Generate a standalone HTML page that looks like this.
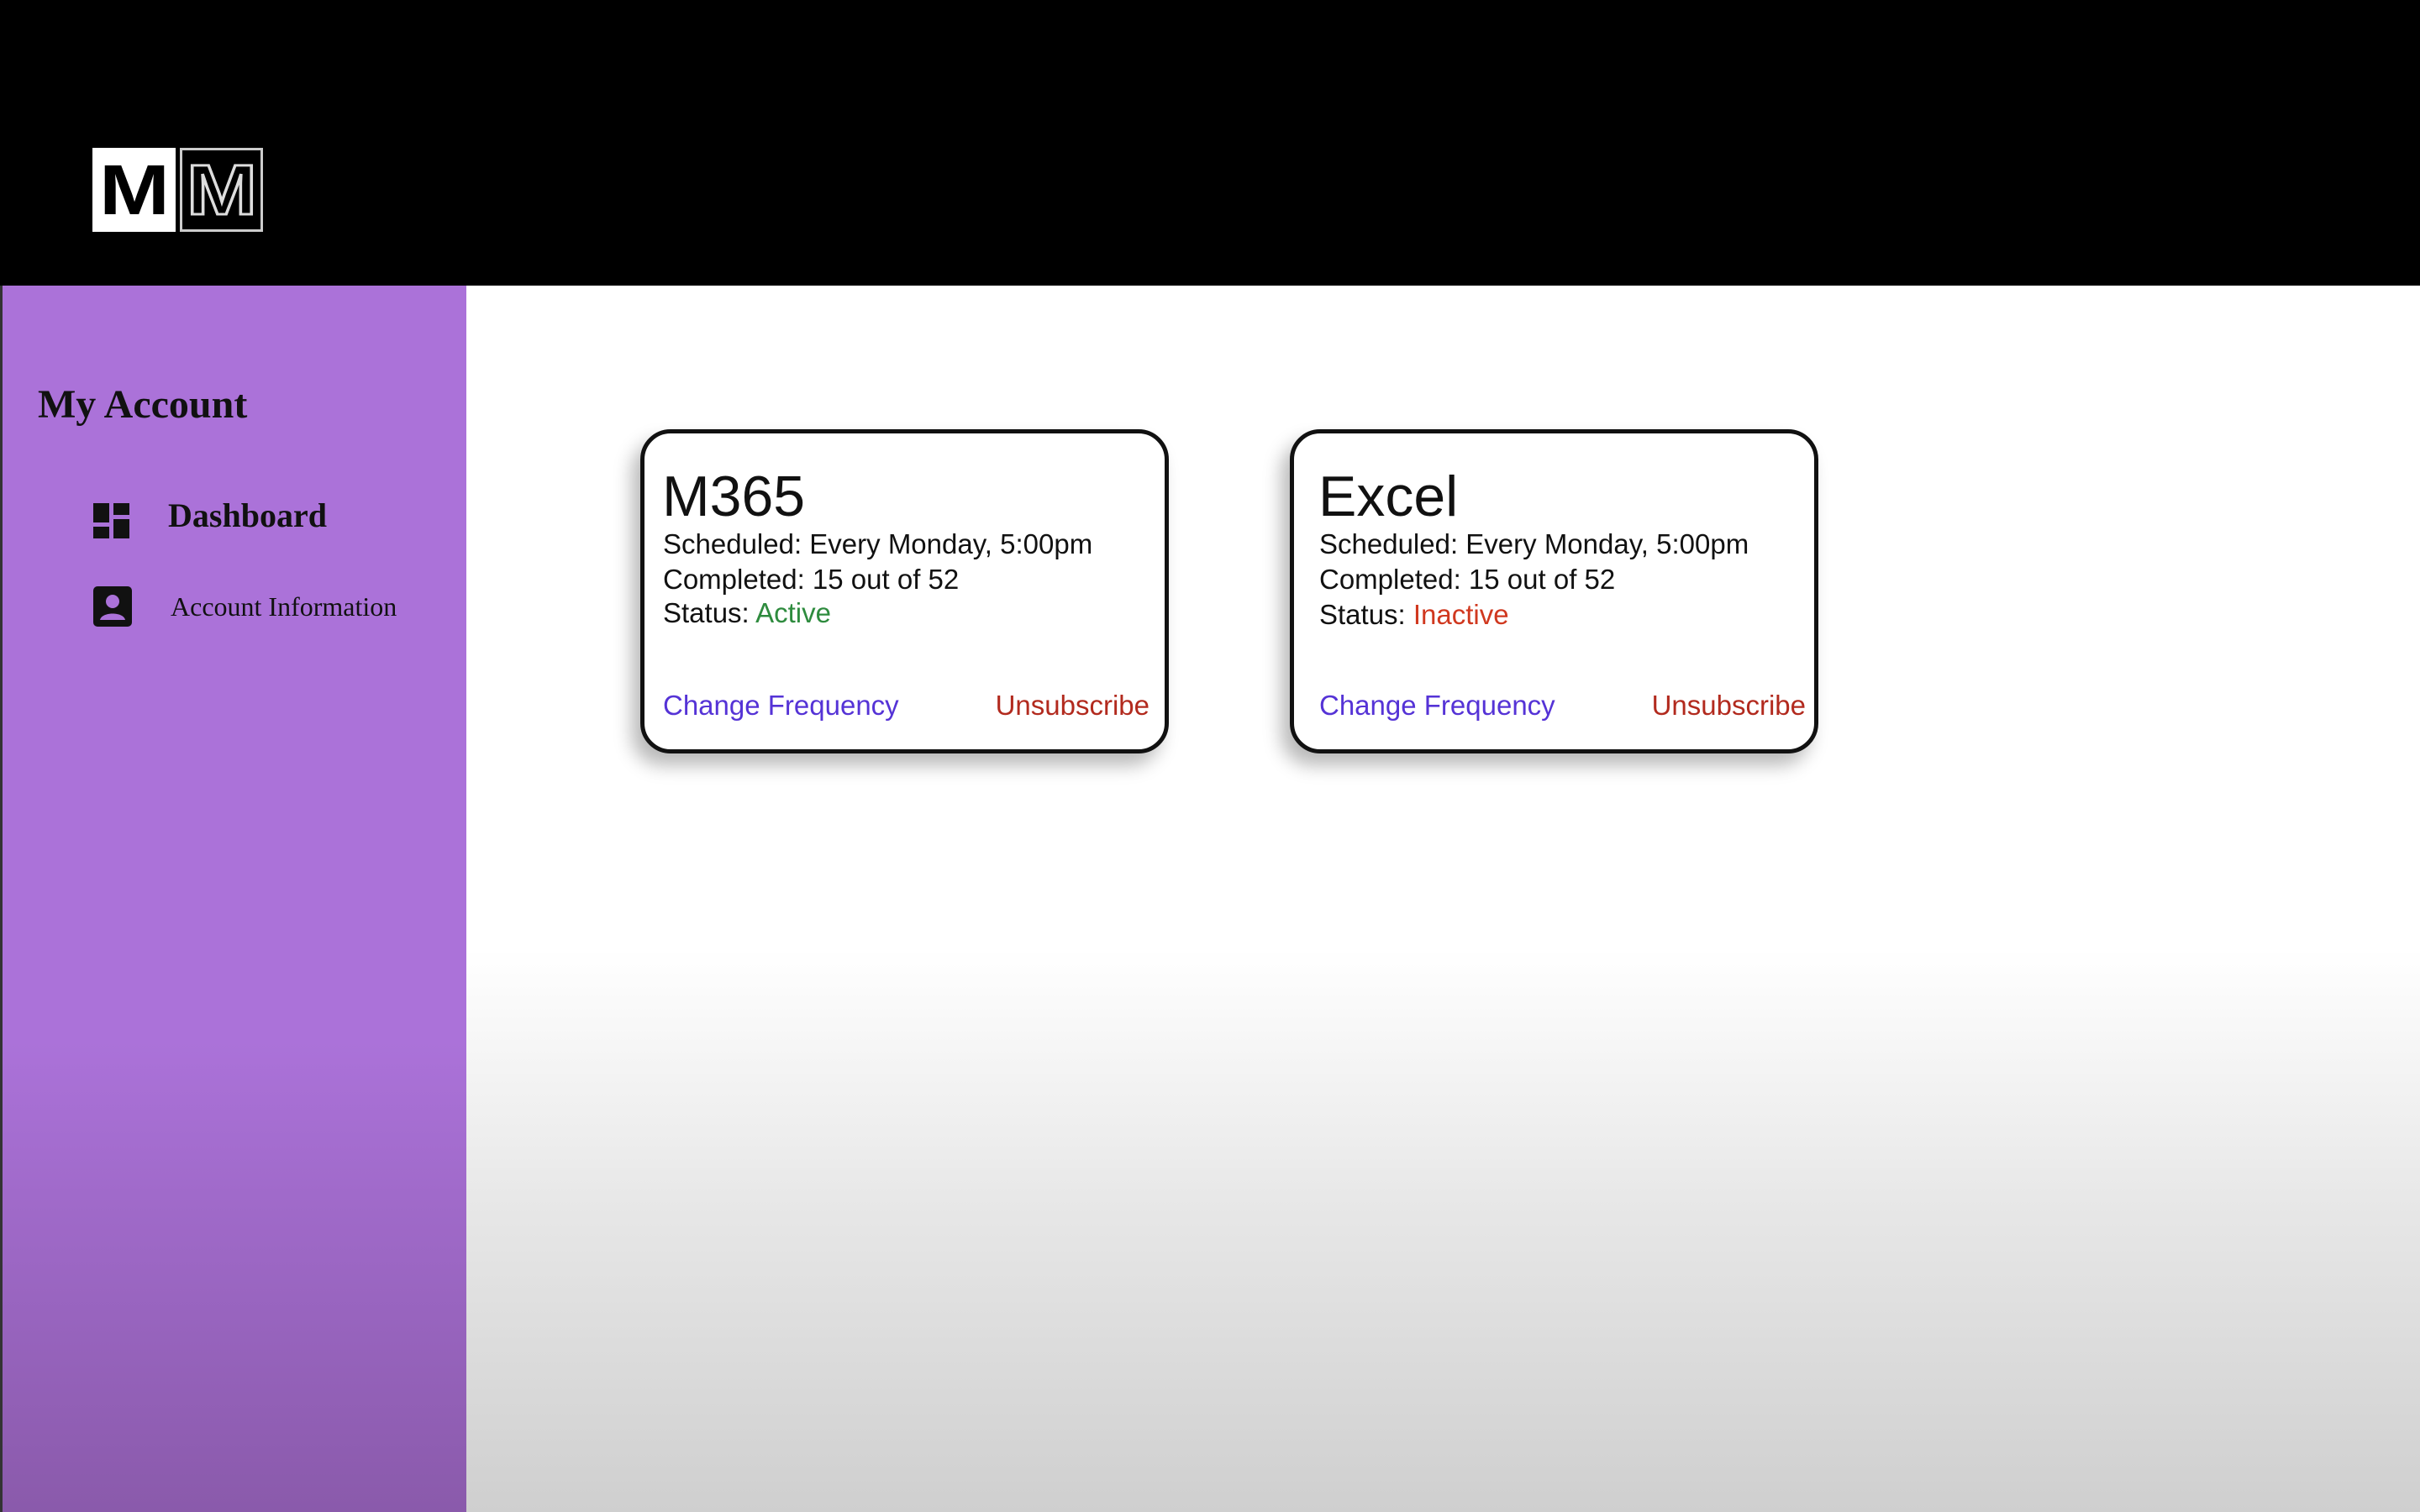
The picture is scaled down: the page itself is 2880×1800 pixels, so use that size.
<!DOCTYPE html>
<html><head><meta charset="utf-8"><style>
*{margin:0;padding:0;box-sizing:border-box}
body{width:2880px;height:1800px;overflow:hidden;position:relative;background:linear-gradient(180deg,#fff 0,#fff 1130px,#e6e6e6 1450px,#cfcfcf 1800px);font-family:"Liberation Sans",sans-serif}
.hdr{position:absolute;left:0;top:0;width:2880px;height:340px;background:#000}
.lg{position:absolute;top:176px;width:99px;height:100px;font:bold 84px "Liberation Sans",sans-serif;text-align:center;line-height:100px}
.lg span{display:inline-block;transform:scaleX(1.2)}
.l1{left:110px;background:#fff;color:#000}
.l2{left:214px;border:3px solid #ccc;color:#000;-webkit-text-stroke:3px #ddd;line-height:94px}
.side{position:absolute;left:0;top:340px;width:555px;height:1460px;background:linear-gradient(180deg,#ab72d9 0,#ab72d9 900px,#8a5aab 1460px);border-left:3px solid #333}
.serif{font-family:"Liberation Serif",serif;color:#111;position:absolute}
.card{position:absolute;top:511px;width:629px;height:386px;background:#fff;border:5px solid #111;border-radius:36px;box-shadow:-10px 14px 22px rgba(0,0,0,.28)}
.card h1{position:absolute;left:21px;top:36px;font-weight:normal;font-size:68px;color:#111}
.card p{position:absolute;left:22px;font-size:33px;color:#111}
.card p.b{color:#5533d6}.card p.r{color:#b22a1e;left:auto;right:18px}
.c2 h1,.c2 p{margin-left:8px}
</style></head><body>
<div class="hdr"></div>
<div class="lg l1"><span>M</span></div><div class="lg l2"><span>M</span></div>
<div class="side">
<div class="serif" style="left:42px;top:114px;font-size:48px;font-weight:bold">My Account</div>
<svg style="position:absolute;left:108px;top:259px" width="43" height="42" viewBox="0 0 43 42"><rect x="0" y="0" width="19" height="23" fill="#111"/><rect x="24" y="0" width="19" height="14" fill="#111"/><rect x="0" y="28" width="19" height="14" fill="#111"/><rect x="24" y="19" width="19" height="23" fill="#111"/></svg>
<div class="serif" style="left:197px;top:250px;font-size:40px;font-weight:bold">Dashboard</div>
<svg style="position:absolute;left:108px;top:358px" width="46" height="48" viewBox="0 0 46 48"><rect x="0" y="0" width="46" height="48" rx="5" fill="#111"/><circle cx="23" cy="18" r="8" fill="#ab72d9"/><path d="M8 40 C10 30 36 30 38 40 Z" fill="#ab72d9"/></svg>
<div class="serif" style="left:200px;top:364px;font-size:32px">Account Information</div>
</div>
<div class="card" style="left:762px">
<h1>M365</h1>
<p style="top:113px">Scheduled: Every Monday, 5:00pm</p>
<p style="top:155px">Completed: 15 out of 52</p>
<p style="top:195px">Status: <span style="color:#2e8b3e">Active</span></p>
<p class="b" style="top:305px">Change Frequency</p>
<p class="r" style="top:305px">Unsubscribe</p>
</div>
<div class="card c2" style="left:1535px">
<h1>Excel</h1>
<p style="top:113px">Scheduled: Every Monday, 5:00pm</p>
<p style="top:155px">Completed: 15 out of 52</p>
<p style="top:197px">Status: <span style="color:#d0381f">Inactive</span></p>
<p class="b" style="top:305px">Change Frequency</p>
<p class="r" style="top:305px;right:10px">Unsubscribe</p>
</div>
</body></html>
